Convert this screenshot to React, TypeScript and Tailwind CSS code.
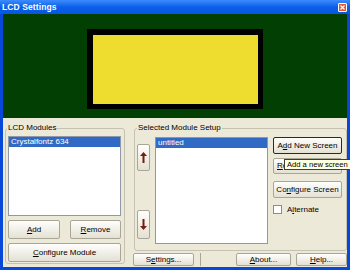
import React from "react";

const font = { fontFamily: '"Liberation Sans", Arial, sans-serif' };

function Btn({
  children,
  className = "",
  dflt = false,
}: {
  children: React.ReactNode;
  className?: string;
  dflt?: boolean;
}) {
  return (
    <div
      className={`flex items-center justify-center rounded-[2px] border bg-gradient-to-b from-[#fefefd] to-[#e4e1d3] text-[8px] leading-none text-black ${
        dflt ? "border-[#2a2a2a]" : "border-[#a9a696]"
      } ${className}`}
    >
      <span className="whitespace-nowrap">{children}</span>
    </div>
  );
}

function Arrow({ up }: { up: boolean }) {
  return (
    <svg width="7" height="11" viewBox="0 0 7 11">
      {up ? (
        <>
          <polygon points="3.5,0 7,4 0,4" fill="#7a1a12" />
          <rect x="2.5" y="4" width="2" height="7" fill="#7a1a12" />
        </>
      ) : (
        <>
          <rect x="2.5" y="0" width="2" height="7" fill="#7a1a12" />
          <polygon points="3.5,11 7,7 0,7" fill="#7a1a12" />
        </>
      )}
    </svg>
  );
}

export default function App() {
  return (
    <div
      className="w-[350px] h-[270px] overflow-hidden bg-[#0848d8] flex flex-col"
      style={font}
    >
      {/* Title bar */}
      <div className="h-[14px] flex items-center justify-between bg-gradient-to-b from-[#3b8cfd] via-[#0a5fe9] to-[#0756e2] pl-[2px] pr-[3px]">
        <span className="text-[8.5px] font-bold text-white leading-none tracking-[0.1px]">
          LCD Settings
        </span>
        <div className="w-[9px] h-[9px] rounded-[1px] border border-white bg-[#e0562e] flex items-center justify-center">
          <svg width="5" height="5" viewBox="0 0 5 5">
            <path d="M0.5 0.5 L4.5 4.5 M4.5 0.5 L0.5 4.5" stroke="white" strokeWidth="1.2" />
          </svg>
        </div>
      </div>

      {/* Body */}
      <div className="mx-[3px] h-[253px] bg-[#ece9d8] flex flex-col">
        {/* LCD preview */}
        <div className="h-[104px] bg-[#023f02] flex justify-center pt-[15px]">
          <div className="w-[176px] h-[80px] bg-black p-[6px] pr-[5px] pb-[5px]">
            <div className="w-full h-full bg-[#eedc2e]" />
          </div>
        </div>

        {/* Lower panel */}
        <div className="h-[149px] flex pl-[2px] pt-[10px]">
          {/* LCD Modules */}
          <div className="relative w-[120px] h-[136px] border border-[#c5c2b2] rounded-[3px] pt-[7px] pl-[2px]">
            <span className="absolute -top-[6px] left-[1px] bg-[#ece9d8] px-[1px] text-[8px] leading-[10px] text-black">
              LCD Modules
            </span>
            <div className="w-[113px] h-[80px] border border-[#8e98a8] bg-white">
              <div className="h-[10px] bg-[#316ac5] text-white text-[8px] leading-[10px] pl-[2px]">
                Crystalfontz 634
              </div>
            </div>
            <div className="flex mt-[4px] gap-[10px]">
              <Btn className="w-[52px] h-[19px]">
                <u>A</u>dd
              </Btn>
              <Btn className="w-[51px] h-[19px]">
                <u>R</u>emove
              </Btn>
            </div>
            <Btn className="w-[113px] h-[19px] mt-[4px]">
              <u>C</u>onfigure Module
            </Btn>
          </div>

          {/* Right column */}
          <div className="ml-[8px] w-[214px] flex flex-col">
            <div className="relative ml-[1px] w-[213px] h-[123px] border border-[#c5c2b2] rounded-[3px] pt-[8px] pl-[2px] flex">
              <span className="absolute -top-[6px] left-[2px] bg-[#ece9d8] px-[1px] text-[8px] leading-[10px] text-black">
                Selected Module Setup
              </span>
              {/* arrows */}
              <div className="w-[13px] h-[107px] flex flex-col justify-between pt-[7px] pb-[5px]">
                <Btn className="w-[13px] h-[27px]">
                  <Arrow up />
                </Btn>
                <Btn className="w-[13px] h-[29px]">
                  <Arrow up={false} />
                </Btn>
              </div>
              {/* list */}
              <div className="ml-[5px] w-[113px] h-[107px] border border-[#8e98a8] bg-white">
                <div className="h-[10px] bg-[#316ac5] text-white text-[8px] leading-[10px] pl-[2px]">
                  untitled
                </div>
              </div>
              {/* buttons */}
              <div className="relative ml-[5px] w-[69px] flex flex-col">
                <Btn dflt className="w-[69px] h-[17px]">
                  A<u>d</u>d New Screen
                </Btn>
                <Btn className="w-[69px] h-[16px] mt-[4px] !justify-start pl-[3px]">
                  <u>R</u>emove Screen
                </Btn>
                <Btn className="w-[69px] h-[17px] mt-[7px]">
                  Co<u>n</u>figure Screen
                </Btn>
                <div className="flex items-center mt-[7px] gap-[5px]">
                  <div className="w-[9px] h-[9px] border border-[#8c8c8c] bg-white" />
                  <span className="text-[8px] leading-none text-black">
                    A<u>l</u>ternate
                  </span>
                </div>
                {/* tooltip */}
                <div className="absolute left-[11px] top-[22px] h-[11px] bg-[#ffffe1] border border-[#3c3c3c] pl-[2px] pr-[6px] flex items-center">
                  <span className="whitespace-nowrap text-[7.6px] leading-none text-black">
                    Add a new screen
                  </span>
                </div>
              </div>
            </div>
            {/* bottom buttons */}
            <div className="flex mt-[2px] items-start">
              <Btn className="w-[61px] h-[13px]">
                S<u>e</u>ttings...
              </Btn>
              <div className="ml-[6px] w-[1px] h-[13px] bg-[#a9a696]" />
              <Btn className="ml-[35px] w-[55px] h-[13px]">
                <u>A</u>bout...
              </Btn>
              <Btn className="ml-[5px] w-[51px] h-[13px]">
                <u>H</u>elp...
              </Btn>
            </div>
          </div>
        </div>
      </div>
    </div>
  );
}
